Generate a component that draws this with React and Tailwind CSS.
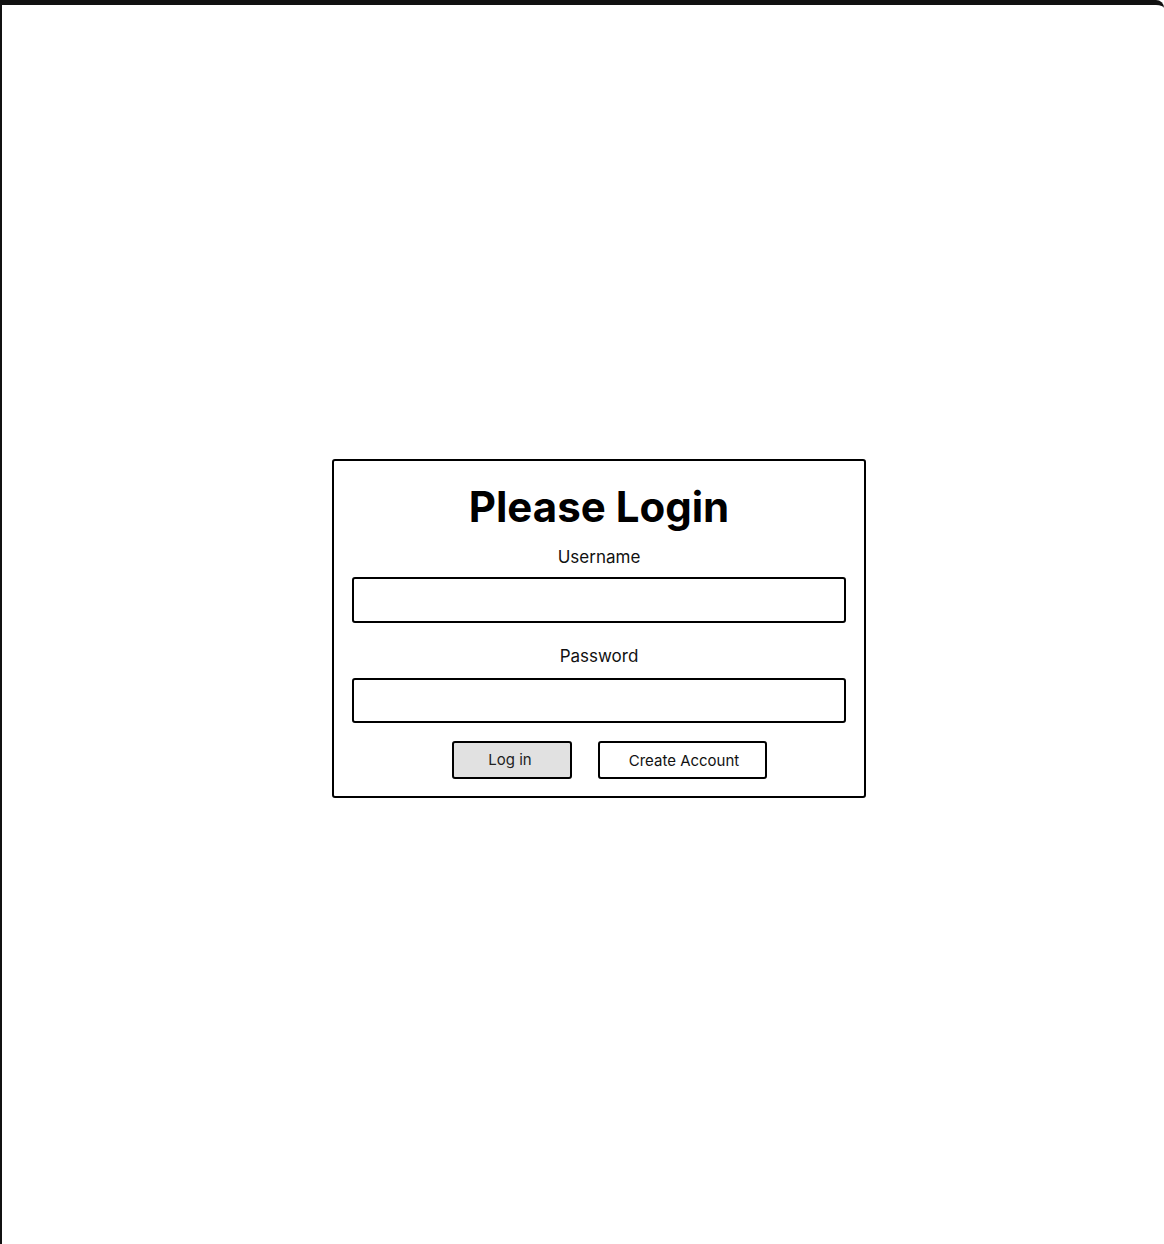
import React from 'react';

const Field = ({ label, labelClass, inputClass }) => (
  <div className="flex flex-col items-center">
    <label className={`text-[17px] leading-[24px] text-[#111] ${labelClass}`}>{label}</label>
    <div className={`w-full border-2 border-black rounded-[3px] bg-white ${inputClass}`}></div>
  </div>
);

const App = () => {
  return (
    <div
      className="h-[1244px] w-[1164px] bg-white border-t-[5px] border-l-2 border-[#111] rounded-tr-[8px] flex items-start justify-center pl-[32px] pt-[454px]"
      style={{ fontFamily: 'Inter, "Liberation Sans", sans-serif' }}
    >
      <div className="w-[534px] h-[339px] border-2 border-black rounded-[3px] px-[18px] pt-[22px] flex flex-col">
        <h1 className="text-center text-[42px] leading-[48px] font-bold text-black">Please Login</h1>

        <Field label="Username" labelClass="mt-[14px] mb-[8px]" inputClass="h-[46px]" />
        <Field label="Password" labelClass="mt-[21px] mb-[10px]" inputClass="h-[45px]" />

        <div className="flex justify-center gap-[26px] mt-[18px] pl-[21px]">
          <button className="w-[120px] h-[38px] border-2 border-black rounded-[3px] bg-[#e1e1e1] text-[15px] text-[#222] pr-[4px]">
            Log in
          </button>
          <button className="w-[169px] h-[38px] border-2 border-black rounded-[3px] bg-white text-[15px] text-[#111] pt-[2px] pl-[3px]">
            Create Account
          </button>
        </div>
      </div>
    </div>
  );
};

export default App;
